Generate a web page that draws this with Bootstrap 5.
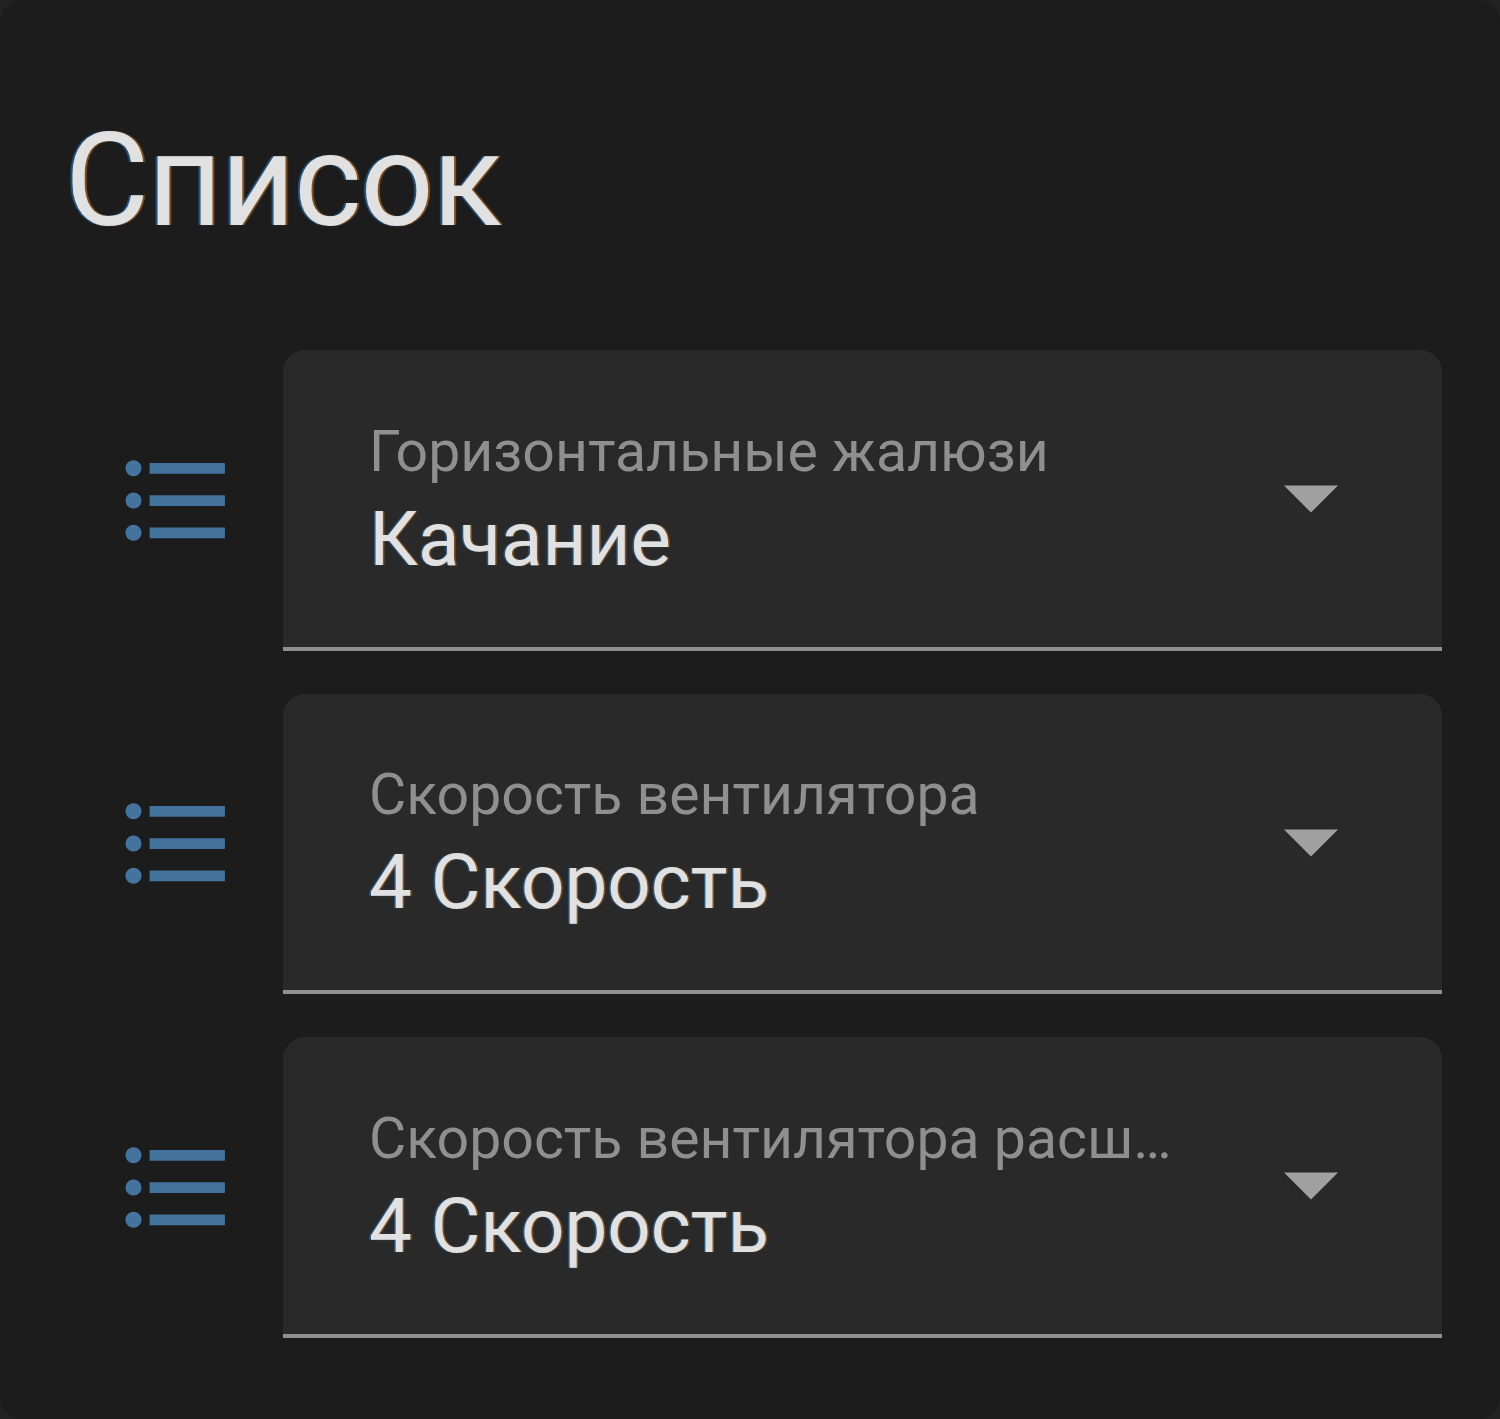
<!doctype html>
<html lang="ru">
<head>
<meta charset="utf-8">
<title>Список</title>
<link href="https://cdn.jsdelivr.net/npm/bootstrap@5.3.0/dist/css/bootstrap.min.css" rel="stylesheet">
<style>
html,body{height:100%;background:#222}
body{font-family:Roboto,"Liberation Sans",sans-serif}
.ha-card{width:1500px;height:1419px;background:#1c1c1c;border-radius:22px;padding:106px 58px 0 65px;overflow:hidden}
.ha-title{font-size:129px;line-height:150px;font-weight:400;color:#e1e1e1;margin:0 0 94px;letter-spacing:-1.3px;text-shadow:-2px 0 1px rgba(40,120,190,.65),2px 0 1px rgba(190,110,30,.65)}
.ha-rows{gap:43px}
.ha-icon{width:129px;height:129px;margin:0 42px 0 47px;flex:none;fill:#44739e}
.ha-field{height:300.5px;background:#292929;border-bottom:4px solid #8f8f8f;border-radius:22px 22px 0 0;padding:0 104px 0 86px;min-width:0}
.ha-label{font-size:57.2px;line-height:86px;color:#8f8f8f;white-space:nowrap;overflow:hidden;text-overflow:ellipsis}
.ha-value{font-size:76.3px;line-height:89px;color:#e1e1e1;white-space:nowrap;text-shadow:-1.5px 0 1px rgba(40,120,190,.65),1.5px 0 1px rgba(190,110,30,.65)}
.ha-text{min-width:0;width:808px;margin-top:-4px}
.ha-arrow{width:54px;height:28px;flex:none;fill:#a0a0a0;margin-top:2px}
</style>
</head>
<body class="m-0">
<div class="ha-card">
  <h1 class="ha-title">Список</h1>
  <div class="d-flex flex-column ha-rows">
    <div class="d-flex align-items-center">
      <svg class="ha-icon" viewBox="0 0 24 24"><path d="M7,5H21V7H7V5M7,13V11H21V13H7M4,4.5A1.5,1.5 0 0,1 5.5,6A1.5,1.5 0 0,1 4,7.5A1.5,1.5 0 0,1 2.5,6A1.5,1.5 0 0,1 4,4.5M4,10.5A1.5,1.5 0 0,1 5.5,12A1.5,1.5 0 0,1 4,13.5A1.5,1.5 0 0,1 2.5,12A1.5,1.5 0 0,1 4,10.5M7,19V17H21V19H7M4,16.5A1.5,1.5 0 0,1 5.5,18A1.5,1.5 0 0,1 4,19.5A1.5,1.5 0 0,1 2.5,18A1.5,1.5 0 0,1 4,16.5Z"/></svg>
      <div class="ha-field flex-grow-1 d-flex align-items-center justify-content-between">
        <div class="ha-text"><div class="ha-label">Горизонтальные жалюзи</div><div class="ha-value">Качание</div></div>
        <svg class="ha-arrow" viewBox="0 0 10 5"><path d="M0,0H10L5,5Z"/></svg>
      </div>
    </div>
    <div class="d-flex align-items-center">
      <svg class="ha-icon" viewBox="0 0 24 24"><path d="M7,5H21V7H7V5M7,13V11H21V13H7M4,4.5A1.5,1.5 0 0,1 5.5,6A1.5,1.5 0 0,1 4,7.5A1.5,1.5 0 0,1 2.5,6A1.5,1.5 0 0,1 4,4.5M4,10.5A1.5,1.5 0 0,1 5.5,12A1.5,1.5 0 0,1 4,13.5A1.5,1.5 0 0,1 2.5,12A1.5,1.5 0 0,1 4,10.5M7,19V17H21V19H7M4,16.5A1.5,1.5 0 0,1 5.5,18A1.5,1.5 0 0,1 4,19.5A1.5,1.5 0 0,1 2.5,18A1.5,1.5 0 0,1 4,16.5Z"/></svg>
      <div class="ha-field flex-grow-1 d-flex align-items-center justify-content-between">
        <div class="ha-text"><div class="ha-label">Скорость вентилятора</div><div class="ha-value">4 Скорость</div></div>
        <svg class="ha-arrow" viewBox="0 0 10 5"><path d="M0,0H10L5,5Z"/></svg>
      </div>
    </div>
    <div class="d-flex align-items-center">
      <svg class="ha-icon" viewBox="0 0 24 24"><path d="M7,5H21V7H7V5M7,13V11H21V13H7M4,4.5A1.5,1.5 0 0,1 5.5,6A1.5,1.5 0 0,1 4,7.5A1.5,1.5 0 0,1 2.5,6A1.5,1.5 0 0,1 4,4.5M4,10.5A1.5,1.5 0 0,1 5.5,12A1.5,1.5 0 0,1 4,13.5A1.5,1.5 0 0,1 2.5,12A1.5,1.5 0 0,1 4,10.5M7,19V17H21V19H7M4,16.5A1.5,1.5 0 0,1 5.5,18A1.5,1.5 0 0,1 4,19.5A1.5,1.5 0 0,1 2.5,18A1.5,1.5 0 0,1 4,16.5Z"/></svg>
      <div class="ha-field flex-grow-1 d-flex align-items-center justify-content-between">
        <div class="ha-text"><div class="ha-label">Скорость вентилятора расширенная</div><div class="ha-value">4 Скорость</div></div>
        <svg class="ha-arrow" viewBox="0 0 10 5"><path d="M0,0H10L5,5Z"/></svg>
      </div>
    </div>
  </div>
</div>
<script src="https://cdn.jsdelivr.net/npm/bootstrap@5.3.0/dist/js/bootstrap.bundle.min.js"></script>
</body>
</html>
